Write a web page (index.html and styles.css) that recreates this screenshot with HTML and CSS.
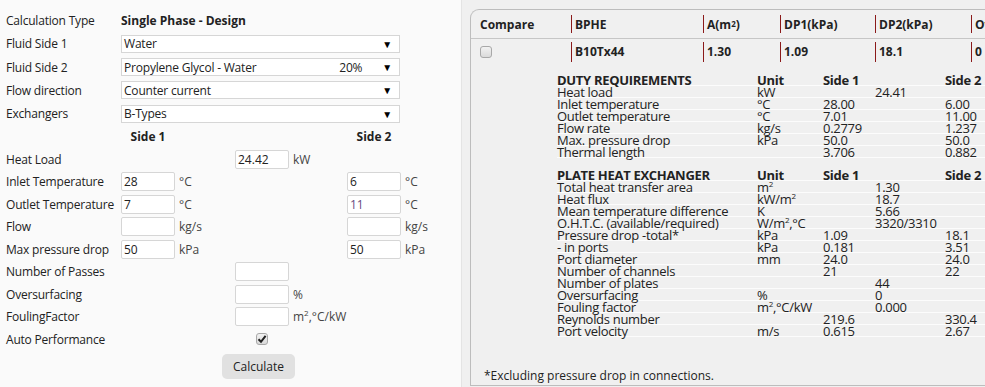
FILE: index.html
```html
<!DOCTYPE html>
<html lang="en">
<head>
    <meta charset="UTF-8">
    <title>BPHE Calculation</title>
    <link rel="stylesheet" href="styles.css">
</head>
<body>
<div class="app">

    <!-- Input form -->
    <div class="form-pane">
        <div class="form-grid">
            <div class="lbl">Calculation Type</div>
            <div class="calc-type span3">Single Phase - Design</div>

            <div class="lbl">Fluid Side 1</div>
            <div class="select span3"><span class="sel-text">Water</span><span class="arrow">&#9660;</span></div>

            <div class="lbl">Fluid Side 2</div>
            <div class="select span3"><span class="sel-text">Propylene Glycol - Water</span><span class="pct">20%</span><span class="arrow">&#9660;</span></div>

            <div class="lbl">Flow direction</div>
            <div class="select span3"><span class="sel-text">Counter current</span><span class="arrow">&#9660;</span></div>

            <div class="lbl">Exchangers</div>
            <div class="select span3"><span class="sel-text">B-Types</span><span class="arrow">&#9660;</span></div>

            <div></div>
            <div class="cell"><div class="side-head">Side 1</div></div>
            <div></div>
            <div class="cell"><div class="side-head">Side 2</div></div>

            <div class="lbl">Heat Load</div>
            <div></div>
            <div class="cell"><div class="inp">24.42</div><span class="unit">kW</span></div>
            <div></div>

            <div class="lbl">Inlet Temperature</div>
            <div class="cell"><div class="inp">28</div><span class="unit">°C</span></div>
            <div></div>
            <div class="cell"><div class="inp">6</div><span class="unit">°C</span></div>

            <div class="lbl">Outlet Temperature</div>
            <div class="cell"><div class="inp">7</div><span class="unit">°C</span></div>
            <div></div>
            <div class="cell"><div class="inp calc">11</div><span class="unit">°C</span></div>

            <div class="lbl">Flow</div>
            <div class="cell"><div class="inp"></div><span class="unit">kg/s</span></div>
            <div></div>
            <div class="cell"><div class="inp"></div><span class="unit">kg/s</span></div>

            <div class="lbl">Max pressure drop</div>
            <div class="cell"><div class="inp">50</div><span class="unit">kPa</span></div>
            <div></div>
            <div class="cell"><div class="inp">50</div><span class="unit">kPa</span></div>

            <div class="lbl">Number of Passes</div>
            <div></div>
            <div class="cell"><div class="inp"></div></div>
            <div></div>

            <div class="lbl">Oversurfacing</div>
            <div></div>
            <div class="cell"><div class="inp"></div><span class="unit">%</span></div>
            <div></div>

            <div class="lbl">FoulingFactor</div>
            <div></div>
            <div class="cell"><div class="inp"></div><span class="unit">m<sup>2</sup>,°C/kW</span></div>
            <div></div>

            <div class="lbl">Auto Performance</div>
            <div></div>
            <div class="cell"><div class="check-wrap"><span class="check on"><svg width="10" height="10" viewBox="0 0 10 10"><path d="M1.5 5.2 L4 7.8 L8.6 1.8" fill="none" stroke="#222" stroke-width="2"/></svg></span></div></div>
            <div></div>
        </div>
        <div class="actions">
            <button class="btn">Calculate</button>
        </div>
    </div>

    <!-- Results -->
    <div class="result-pane">
        <div class="result-panel">
            <div class="res-row res-head">
                <div class="c-compare">Compare</div>
                <div class="c c-bphe"><span>BPHE</span></div>
                <div class="c c-a"><span>A(m<sup>2</sup>)</span></div>
                <div class="c c-dp1"><span>DP1(kPa)</span></div>
                <div class="c c-dp2"><span>DP2(kPa)</span></div>
                <div class="c c-o"><span>Oversurfacing(%)</span></div>
            </div>
            <div class="res-row res-data">
                <div class="c-compare"><span class="check"></span></div>
                <div class="c c-bphe"><span>B10Tx44</span></div>
                <div class="c c-a"><span>1.30</span></div>
                <div class="c c-dp1"><span>1.09</span></div>
                <div class="c c-dp2"><span>18.1</span></div>
                <div class="c c-o"><span>0</span></div>
            </div>

            <div class="details">
                <div class="section">
                    <div class="dt-row dt-head"><span>DUTY REQUIREMENTS</span><span>Unit</span><span class="s1">Side 1</span><span class="s2">Side 2</span></div>
                    <div class="dt-row"><span>Heat load</span><span>kW</span><span class="mid">24.41</span></div>
                    <div class="dt-row"><span>Inlet temperature</span><span>°C</span><span class="s1">28.00</span><span class="s2">6.00</span></div>
                    <div class="dt-row"><span>Outlet temperature</span><span>°C</span><span class="s1">7.01</span><span class="s2">11.00</span></div>
                    <div class="dt-row"><span>Flow rate</span><span>kg/s</span><span class="s1">0.2779</span><span class="s2">1.237</span></div>
                    <div class="dt-row"><span>Max. pressure drop</span><span>kPa</span><span class="s1">50.0</span><span class="s2">50.0</span></div>
                    <div class="dt-row"><span>Thermal length</span><span></span><span class="s1">3.706</span><span class="s2">0.882</span></div>
                </div>
                <div class="section">
                    <div class="dt-row dt-head"><span>PLATE HEAT EXCHANGER</span><span>Unit</span><span class="s1">Side 1</span><span class="s2">Side 2</span></div>
                    <div class="dt-row"><span>Total heat transfer area</span><span>m<sup>2</sup></span><span class="mid">1.30</span></div>
                    <div class="dt-row"><span>Heat flux</span><span>kW/m<sup>2</sup></span><span class="mid">18.7</span></div>
                    <div class="dt-row"><span>Mean temperature difference</span><span>K</span><span class="mid">5.66</span></div>
                    <div class="dt-row"><span>O.H.T.C. (available/required)</span><span>W/m<sup>2</sup>,°C</span><span class="mid">3320/3310</span></div>
                    <div class="dt-row"><span>Pressure drop -total*</span><span>kPa</span><span class="s1">1.09</span><span class="s2">18.1</span></div>
                    <div class="dt-row"><span>- in ports</span><span>kPa</span><span class="s1">0.181</span><span class="s2">3.51</span></div>
                    <div class="dt-row"><span>Port diameter</span><span>mm</span><span class="s1">24.0</span><span class="s2">24.0</span></div>
                    <div class="dt-row"><span>Number of channels</span><span></span><span class="s1">21</span><span class="s2">22</span></div>
                    <div class="dt-row"><span>Number of plates</span><span></span><span class="mid">44</span></div>
                    <div class="dt-row"><span>Oversurfacing</span><span>%</span><span class="mid">0</span></div>
                    <div class="dt-row"><span>Fouling factor</span><span>m<sup>2</sup>,°C/kW</span><span class="mid">0.000</span></div>
                    <div class="dt-row"><span>Reynolds number</span><span></span><span class="s1">219.6</span><span class="s2">330.4</span></div>
                    <div class="dt-row"><span>Port velocity</span><span>m/s</span><span class="s1">0.615</span><span class="s2">2.67</span></div>
                </div>
            </div>

            <div class="footnote">*Excluding pressure drop in connections.</div>
        </div>
    </div>

</div>
</body>
</html>
```

FILE: styles.css
```css
body {
    margin: 0;
    font-family: "Open Sans", "Noto Sans", sans-serif;
    font-size: 12px;
    color: #222;
    background-color: #fafafa;
}

.app {
    display: flex;
    height: 387px;
    overflow: hidden;
}

/* ---------- form pane ---------- */

.form-pane {
    width: 461px;
    flex: none;
    background-color: #fafafa;
    border-right: 1px solid #e4e4e4;
}

.form-grid {
    display: grid;
    grid-template-columns: 115px 114px 112px 114px;
    grid-template-rows: repeat(5, 23.25px) repeat(10, 22.5px);
    padding: 9px 0 0 6px;
}

.lbl {
    display: flex;
    align-items: center;
    white-space: nowrap;
    letter-spacing: -0.2px;
}

.span3 {
    grid-column: 2 / 5;
}

.calc-type {
    display: flex;
    align-items: center;
    font-weight: bold;
}

.select {
    display: flex;
    align-items: center;
    align-self: center;
    width: 279px;
    height: 18px;
    box-sizing: border-box;
    border: 1px solid #d6d6d6;
    background-color: #fff;
    padding: 0 7px 0 2px;
    font-size: 12px;
    letter-spacing: -0.2px;
}

.sel-text {
    flex: 1;
}

.pct {
    margin-right: 20px;
}

.arrow {
    font-size: 10px;
    color: #000;
}

.cell {
    display: flex;
    align-items: center;
}

.side-head {
    width: 54px;
    text-align: center;
    font-weight: bold;
    white-space: nowrap;
}

.inp {
    width: 54px;
    height: 19px;
    box-sizing: border-box;
    border: 1px solid #d6d6d6;
    border-radius: 2px;
    background-color: #fff;
    padding: 0 2px;
    line-height: 17px;
}

.inp.calc {
    color: #6a4c82;
}

.unit {
    margin-left: 4px;
    color: #444;
    white-space: nowrap;
}

sup {
    font-size: 8px;
    line-height: 0;
}

.check-wrap {
    width: 54px;
    display: flex;
    justify-content: center;
}

.check {
    display: inline-flex;
    align-items: center;
    justify-content: center;
    width: 12px;
    height: 12px;
    box-sizing: border-box;
    border: 1px solid #a8a8a8;
    border-radius: 3px;
    background: linear-gradient(#f2f2f2, #dadada);
}

.actions {
    padding: 4px 0 0 222px;
}

.btn {
    width: 73px;
    height: 25px;
    border: none;
    border-radius: 5px;
    background-color: #e1e1e1;
    font-family: inherit;
    font-size: 12px;
    color: #222;
}

/* ---------- result pane ---------- */

.result-pane {
    flex: 1;
    min-width: 0;
    background-color: #f0f0f0;
    padding: 9px 0 0 8px;
}

.result-panel {
    display: flex;
    flex-direction: column;
    height: 377px;
    box-sizing: border-box;
    border: 1px solid #bdbdbd;
    border-right: none;
    border-top-left-radius: 9px;
    overflow: hidden;
}

.res-row {
    display: flex;
    flex: none;
    white-space: nowrap;
    font-weight: bold;
}

.res-head {
    height: 28px;
    border-bottom: 1px solid #c6c6c6;
}

.res-data {
    height: 25px;
}

.c-compare {
    width: 100px;
    flex: none;
    display: flex;
    align-items: center;
    padding-left: 9px;
    box-sizing: border-box;
}

.c {
    flex: none;
    display: flex;
    align-items: center;
}

.c span {
    display: flex;
    align-items: center;
    height: 20px;
    padding-left: 3px;
    border-left: 1px solid #8b1a1a;
}

.res-head .c span {
    height: 18px;
}

.c-bphe { width: 132px; }
.c-a { width: 77px; }
.c-dp1 { width: 95px; }
.c-dp2 { width: 96px; }
.c-o { width: 120px; }

.details {
    flex: none;
    padding: 10px 0 0 86px;
}

.section {
    margin-bottom: 11px;
}

.dt-row {
    display: grid;
    grid-template-columns: 200px 66px 52px 70px 1fr;
    height: 12px;
    line-height: 12px;
    font-size: 13px;
    background: linear-gradient(to top, #fcfcfc 1px, transparent 1px);
    white-space: nowrap;
    letter-spacing: -0.3px;
}

.dt-head {
    font-weight: bold;
}

.dt-row .s1 { grid-column: 3 / 5; }
.dt-row .mid { grid-column: 4 / 6; }
.dt-row .s2 { grid-column: 5; }

.footnote {
    margin-top: auto;
    padding: 0 0 1px 13px;
    line-height: 16px;
    font-size: 12px;
}
```
